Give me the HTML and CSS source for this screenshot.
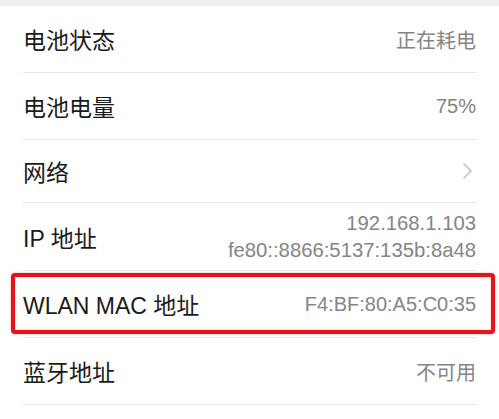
FILE: index.html
```html
<!DOCTYPE html>
<html lang="zh-CN">
<head>
<meta charset="utf-8">
<link rel="stylesheet" href="styles.css">
</head>
<body>
<div class="topband"></div>
<ul class="list">
  <li class="row r1"><span class="label">电池状态</span><span class="value">正在耗电</span></li>
  <li class="row r2"><span class="label">电池电量</span><span class="value">75%</span></li>
  <li class="row r3"><span class="label">网络</span>
    <svg class="chev" width="11" height="18" viewBox="0 0 11 18"><path d="M1.5 1.5 L9 9 L1.5 16.5" fill="none" stroke="#c4c4c4" stroke-width="1.6"/></svg>
  </li>
  <li class="row r4"><span class="label">IP 地址</span><span class="value multi"><span>192.168.1.103</span><span>fe80::8866:5137:135b:8a48</span></span></li>
  <li class="row r5"><span class="label">WLAN MAC 地址</span><span class="value">F4:BF:80:A5:C0:35</span><span class="highlight"></span></li>
  <li class="row r6"><span class="label">蓝牙地址</span><span class="value">不可用</span></li>
</ul>
</body>
</html>
```

FILE: styles.css
```css
html, body {
  margin: 0;
  padding: 0;
  background: #ffffff;
}
body {
  width: 499px;
  height: 419px;
  overflow: hidden;
  font-family: "Liberation Sans", "Noto Sans CJK SC", sans-serif;
}
.topband {
  height: 6px;
  background: #efefef;
}
.list {
  list-style: none;
  margin: 0;
  padding: 0 23px 0 23px;
}
.row {
  position: relative;
  display: flex;
  align-items: center;
  justify-content: space-between;
  height: 66px;
  border-bottom: 1px solid #e6e6e6;
}
.r3 { height: 62px; }
.r4 { height: 67px; }
.r5 { height: 66px; }
.label {
  font-size: 23px;
  color: #1a1a1a;
  font-family: "Liberation Sans", "Noto Sans CJK SC", sans-serif;
}
.value {
  font-size: 20px;
  color: #858585;
  font-family: "Liberation Sans", "Noto Sans CJK SC", sans-serif;
}
.multi {
  display: flex;
  flex-direction: column;
  align-items: flex-end;
  line-height: 27px;
  font-size: 20.3px;
}
.chev {
  margin-right: 3px;
}
.highlight {
  position: absolute;
  left: -12px;
  right: -19px;
  top: 2px;
  bottom: 3px;
  border: 4.5px solid #e5141b;
  border-radius: 4px;
  box-shadow: 0 0 2px rgba(229, 20, 27, 0.5), inset 0 0 2px rgba(229, 20, 27, 0.4);
}
```
